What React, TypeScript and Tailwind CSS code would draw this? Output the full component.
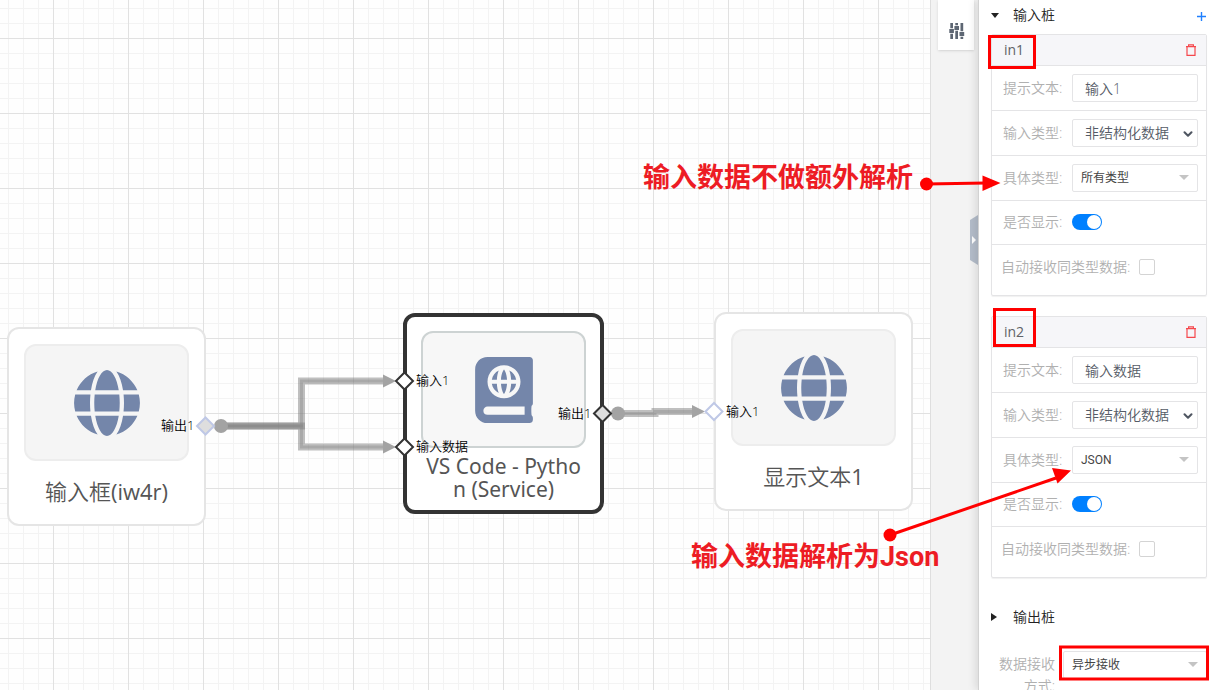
import { useId, useState } from "react";
import type { ReactNode } from "react";
import { FaAtlas, FaGlobe } from "react-icons/fa";
import { ChevronDown } from "lucide-react";

type PinData = { name: string; hint: string; kind: string };

const pins: PinData[] = [
  { name: "in1", hint: "输入1", kind: "所有类型" },
  { name: "in2", hint: "输入数据", kind: "JSON" },
];

function TrashIcon() {
  return (
    <svg width="12" height="12" viewBox="0 0 12 12" fill="none" stroke="currentColor" strokeWidth="1.2">
      <path d="M1 2.600H11M3.600 2.400V0.800H8.400V2.400M2 2.800V11.300H10V2.800" />
    </svg>
  );
}

function SlidersIcon() {
  return (
    <svg width="16" height="16" viewBox="0 0 16 16" fill="#5d6673">
      <path d="M1.300 0H4V5.300H1.300ZM0.300 6H4.900V10H0.300ZM1.300 10.700H4V16H1.300Z" />
      <path d="M6.300 0H9V2.300H6.300ZM5.400 3H10V7H5.400ZM6.300 7.700H9V16H6.300Z" />
      <path d="M11.500 0H14.200V8.300H11.500ZM10.500 9H15.200V13H10.500ZM11.500 13.700H14.200V16H11.500Z" />
    </svg>
  );
}

function Row({ children, className = "h-[45px] pb-px" }: { children: ReactNode; className?: string }) {
  return <div className={`flex items-center border-b border-[#e4e4e6] pl-[11px] pr-2 ${className}`}>{children}</div>;
}

function Label({ id, children }: { id: string; children: ReactNode }) {
  return (
    <label htmlFor={id} className="w-[69px] shrink-0 whitespace-nowrap text-sm leading-5 text-[#b0b0b0]">
      {children}
    </label>
  );
}

function Dropdown({ id, value }: { id: string; value: string }) {
  return (
    <div className="relative min-w-0 flex-1">
      <select
        id={id}
        className="h-7 w-full appearance-none rounded-[2px] border border-[#e4e4e6] bg-white pl-2 pr-6 font-['Roboto','Noto_Sans_CJK_SC',sans-serif] text-xs font-normal text-[#444]"
      >
        <option>{value}</option>
      </select>
      <svg className="pointer-events-none absolute right-[9px] top-[11px]" width="10" height="5" viewBox="0 0 10 5">
        <path d="M0 0H10L5 5Z" fill="#c4c4c4" />
      </svg>
    </div>
  );
}

function PinCard({ pin }: { pin: PinData }) {
  const id = useId();
  const [hint, setHint] = useState(pin.hint);
  return (
    <section className="rounded-[2px] border border-[#e4e4e6] shadow-[0_1px_1px_rgba(0,0,0,0.06)]">
      <header className="flex h-[31px] items-center justify-between border-b border-[#e4e4e6] bg-[#f6f6f9] pl-3 pr-[9px]">
        <span className="text-sm font-normal text-[#606266]">{pin.name}</span>
        <button type="button" aria-label="删除" className="text-[#f5484d]">
          <TrashIcon />
        </button>
      </header>
      <Row>
        <Label id={`${id}-hint`}>提示文本:</Label>
        <input
          id={`${id}-hint`}
          value={hint}
          onChange={(e) => setHint(e.target.value)}
          className="h-7 min-w-0 flex-1 rounded-[2px] border border-[#e4e4e6] bg-white px-3 text-sm text-[#555b66]"
        />
      </Row>
      <Row>
        <Label id={`${id}-type`}>输入类型:</Label>
        <div className="relative min-w-0 flex-1">
          <select id={`${id}-type`} className="h-7 w-full appearance-none rounded-[2px] border border-[#e4e4e6] bg-white pl-3 pr-6 text-sm text-[#555b66]">
            <option>非结构化数据</option>
          </select>
          <ChevronDown className="pointer-events-none absolute right-[3px] top-2 text-[#4f5661]" size={14} strokeWidth={3.5} />
        </div>
      </Row>
      <Row>
        <Label id={`${id}-kind`}>具体类型:</Label>
        <Dropdown id={`${id}-kind`} value={pin.kind} />
      </Row>
      <Row className="h-11 pb-px">
        <Label id={`${id}-show`}>是否显示:</Label>
        <input
          id={`${id}-show`}
          type="checkbox"
          role="switch"
          defaultChecked
          className="h-4 w-[30px] appearance-none rounded-full bg-[#c4c8d0] p-px before:block before:size-[14px] before:rounded-full before:bg-white checked:bg-[#0080ff] checked:before:ml-[14px]"
        />
      </Row>
      <div className="flex h-[50px] items-center pb-[6px] pl-[9px]">
        <label htmlFor={`${id}-auto`} className="w-[138px] shrink-0 whitespace-nowrap text-sm leading-5 text-[#b0b0b0]">
          自动接收同类型数据:
        </label>
        <input id={`${id}-auto`} type="checkbox" className="size-4 appearance-none rounded-[2px] border border-[#d4d4d4] bg-white checked:bg-[#0080ff]" />
      </div>
    </section>
  );
}

function Node({ className, thumb, icon, children }: { className: string; thumb: string; icon: ReactNode; children: ReactNode }) {
  return (
    <article className={`absolute flex flex-col items-center rounded-xl bg-white ${className}`}>
      <div className={`flex h-[117px] w-[165px] shrink-0 items-center justify-center rounded-xl border-2 text-[#7486aa] ${thumb}`}>{icon}</div>
      <h3 className="flex flex-1 items-center pb-1 text-center text-[22px] leading-[22px] text-[#555]">
        <span>{children}</span>
      </h3>
    </article>
  );
}

function Port({ x, y, fill, stroke }: { x: number; y: number; fill: string; stroke: string }) {
  return <path d={`M${x - 8.5} ${y}L${x} ${y - 8.5}L${x + 8.5} ${y}L${x} ${y + 8.5}Z`} fill={fill} stroke={stroke} strokeWidth="2" />;
}

function Wire({ d }: { d: string }) {
  return (
    <g fill="none" stroke="#808080">
      <path d={d} strokeWidth="7" strokeOpacity="0.5" />
      <path d={d} strokeWidth="3" strokeOpacity="0.35" />
    </g>
  );
}

function Canvas() {
  return (
    <main className="relative min-w-0 flex-1 overflow-hidden bg-[#fefefe]">
      <svg className="absolute inset-0 h-full w-full" aria-hidden="true">
        <defs>
          <pattern id="grid" x="53" y="38" width="75" height="75" patternUnits="userSpaceOnUse">
            <path d="M15.500 0V75M30.500 0V75M45.500 0V75M60.500 0V75M0 15.500H75M0 30.500H75M0 45.500H75M0 60.500H75" stroke="#f3f3f3" />
            <path d="M0.500 0V75M0 0.500H75" stroke="#e1e1e1" />
          </pattern>
        </defs>
        <rect width="100%" height="100%" fill="url(#grid)" />
        <Wire d="M221 426H301.500V381H386" />
        <Wire d="M221 426H301.500V447H386" />
        <Wire d="M618 413.500H655V411.500H695" />
        <g fill="#a3a3a3">
          <circle cx="221" cy="426" r="7" />
          <circle cx="618" cy="413.5" r="7" />
          <path d="M383 374.500L396 381L383 387.500ZM383 440.500L396 447L383 453.500ZM692 405L705 411.500L692 418Z" />
        </g>
      </svg>

      <Node
        className="left-[7px] top-[327px] size-[199px] border-2 border-[#e5e5e5] pt-[15px]"
        thumb="border-[#ededed] bg-[#f5f5f5]"
        icon={<FaGlobe size={68} />}
      >
        输入框<span className="font-normal">(iw4r)</span>
      </Node>
      <Node
        className="left-[403px] top-[313px] size-[201px] border-4 border-[#333] pt-[14px]"
        thumb="border-[#cdd3d3] bg-[#f7f7f7]"
        icon={<FaAtlas size={66} />}
      >
        <span className="font-['Noto_Sans',sans-serif] text-[21px] font-normal">
          VS Code - Pytho
          <br />n (Service)
        </span>
      </Node>
      <Node
        className="left-[714px] top-[312px] size-[199px] border-2 border-[#e5e5e5] pt-[15px]"
        thumb="border-[#ededed] bg-[#f5f5f5]"
        icon={<FaGlobe size={68} />}
      >
        显示文本<span className="font-normal">1</span>
      </Node>

      <svg className="absolute inset-0 h-full w-full" aria-hidden="true">
        <Port x={205.5} y={426} fill="#dedede" stroke="#bfc8e6" />
        <Port x={404.5} y={381} fill="#fff" stroke="#333" />
        <Port x={404.5} y={447} fill="#fff" stroke="#333" />
        <Port x={602.5} y={413.5} fill="#dedede" stroke="#333" />
        <Port x={714} y={411.5} fill="#fff" stroke="#bfc8e6" />
      </svg>
      <div className="text-[13px] leading-4 text-black">
        <span className="absolute left-[161px] top-[417px]">输出1</span>
        <span className="absolute left-[416px] top-[372px]">输入1</span>
        <span className="absolute left-[416px] top-[438px]">输入数据</span>
        <span className="absolute left-[558px] top-[405px]">输出1</span>
        <span className="absolute left-[726px] top-[403px]">输入1</span>
      </div>
    </main>
  );
}

function Annotations() {
  return (
    <div className="pointer-events-none absolute right-0 top-0 h-[690px] w-[1218px] font-['Roboto','Noto_Sans_CJK_SC',sans-serif] text-[27px] font-bold leading-8 text-[#ed1c24]">
      <svg className="absolute inset-0" width="1218" height="690" viewBox="0 0 1218 690" fill="red" aria-hidden="true">
        <g fill="none" stroke="red" strokeWidth="3">
          <rect x="989.5" y="36.5" width="45" height="31" />
          <rect x="994.5" y="309.5" width="40" height="36" />
          <rect x="1060.5" y="647" width="147" height="32" />
          <path d="M926 184L986 183M890 535L1056 478" />
        </g>
        <circle cx="926.5" cy="184" r="6.5" />
        <circle cx="890" cy="535" r="6.5" />
        <path d="M982.500 175.500L1000.500 183L982.500 191ZM1052 468L1071 470.500L1057.500 483.500Z" />
      </svg>
      <span className="absolute left-[643px] top-[162px] whitespace-nowrap">输入数据不做额外解析</span>
      <span className="absolute left-[691px] top-[541px] whitespace-nowrap">输入数据解析为Json</span>
    </div>
  );
}

export default function App() {
  return (
    <div className="relative flex h-screen overflow-hidden bg-white font-['Open_Sans','Noto_Sans_CJK_SC',sans-serif] font-[350]">
      <Canvas />
      <nav className="relative w-12 shrink-0 border-l border-[#dedede] bg-[#f3f3f3] pl-[7px]">
        <button type="button" aria-label="属性" className="flex h-[50px] w-9 items-center justify-center bg-white pl-[2px] pt-3 shadow-sm">
          <SlidersIcon />
        </button>
        <button type="button" aria-label="收起" className="absolute right-0 top-[215px]">
          <svg width="8" height="50" viewBox="0 0 8 50">
            <path d="M0 5L8 0V50L0 45Z" fill="#b4bdca" />
            <path d="M2 21V29L6 25Z" fill="#fff" />
          </svg>
        </button>
      </nav>
      <aside className="relative w-[240px] shrink-0 border-l border-[#d2d2d2] bg-white pl-3 pr-[11px] shadow-[-3px_0_8px_rgba(0,0,0,0.1)]">
        <div className="flex h-[34px] items-center justify-between pb-1 pr-px">
          <button type="button" className="flex items-center gap-[14px] text-sm text-[#222]">
            <svg width="8" height="5" viewBox="0 0 8 5">
              <path d="M0 0H8L4 5Z" fill="#222" />
            </svg>
            输入桩
          </button>
          <button type="button" aria-label="添加" className="pt-[2px]">
            <svg width="9" height="9" viewBox="0 0 9 9" stroke="#2080ff" strokeWidth="1.4">
              <path d="M4.500 0V9M0 4.500H9" />
            </svg>
          </button>
        </div>
        <div className="flex flex-col gap-5">
          {pins.map((pin) => (
            <PinCard key={pin.name} pin={pin} />
          ))}
        </div>
        <button type="button" className="mt-[27px] flex h-6 items-center gap-4 text-sm text-[#222]">
          <svg width="6" height="8" viewBox="0 0 6 8">
            <path d="M0 0L6 4L0 8Z" fill="#222" />
          </svg>
          输出桩
        </button>
        <div className="mt-[22px] flex items-start">
          <label htmlFor="receive-mode" className="mr-2 mt-[2px] w-16 shrink-0 text-right text-sm leading-[22px] text-[#b0b0b0]">
            数据接收
            <br />
            方式:
          </label>
          <Dropdown id="receive-mode" value="异步接收" />
        </div>
      </aside>
      <Annotations />
    </div>
  );
}
